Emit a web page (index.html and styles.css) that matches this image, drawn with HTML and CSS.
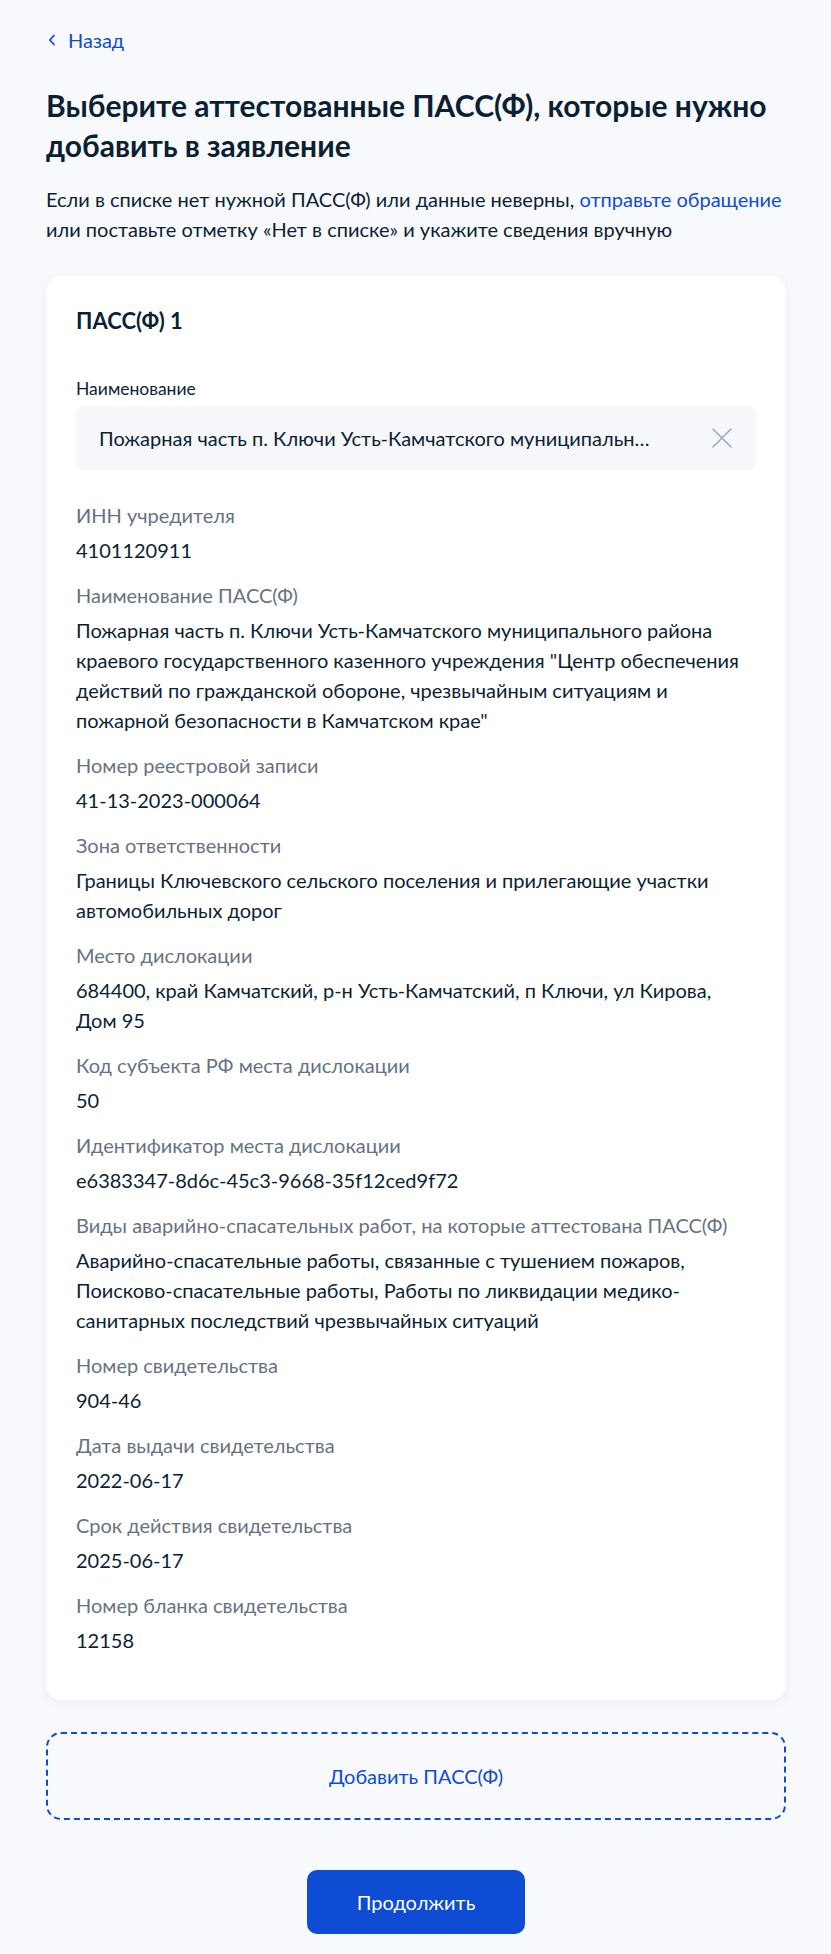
FILE: index.html
```html
<!DOCTYPE html>
<html lang="ru">
<head>
<meta charset="utf-8">
<title>Выбор ПАСС(Ф)</title>
<meta name="viewport" content="width=device-width, initial-scale=1">
<link rel="stylesheet" href="styles.css">
</head>
<body>

<div class="page">
	<a class="back" href="#">
		<svg class="back-icon" width="8" height="12" viewBox="0 0 8 12"><path d="M6 1.5 1.8 6 6 10.5" fill="none" stroke="#0d4cd3" stroke-width="1.8" stroke-linecap="round" stroke-linejoin="round"/></svg>
		Назад
	</a>

	<h1 class="title">Выберите аттестованные ПАСС(Ф), которые нужно добавить в заявление</h1>
	<p class="lead">Если в списке нет нужной ПАСС(Ф) или данные неверны, <a href="#">отправьте обращение</a> или поставьте отметку «Нет в списке» и укажите сведения вручную</p>

	<div class="card">
		<h2 class="card-title">ПАСС(Ф) 1</h2>

		<div class="select-row">
			<label class="select-label">Наименование</label>
			<div class="select">
				<span class="select-value">Пожарная часть п. Ключи Усть-Камчатского муниципальн…</span>
				<svg class="select-clear" width="22" height="22" viewBox="0 0 22 22"><path d="M2 2 20 20M20 2 2 20" stroke="#9aa8cb" stroke-width="1.6" stroke-linecap="round"/></svg>
			</div>
		</div><!-- select-row -->

		<div class="field">
			<div class="field-label">ИНН учредителя</div>
			<div class="field-value">4101120911</div>
		</div>
		<div class="field">
			<div class="field-label">Наименование ПАСС(Ф)</div>
			<div class="field-value">Пожарная часть п. Ключи Усть-Камчатского муниципального района краевого государственного казенного учреждения "Центр обеспечения действий по гражданской обороне, чрезвычайным ситуациям и пожарной безопасности в Камчатском крае"</div>
		</div>
		<div class="field">
			<div class="field-label">Номер реестровой записи</div>
			<div class="field-value">41-13-2023-000064</div>
		</div>
		<div class="field">
			<div class="field-label">Зона ответственности</div>
			<div class="field-value">Границы Ключевского сельского поселения и прилегающие участки автомобильных дорог</div>
		</div>
		<div class="field">
			<div class="field-label">Место дислокации</div>
			<div class="field-value">684400, край Камчатский, р-н Усть-Камчатский, п Ключи, ул Кирова, Дом 95</div>
		</div>
		<div class="field">
			<div class="field-label">Код субъекта РФ места дислокации</div>
			<div class="field-value">50</div>
		</div>
		<div class="field">
			<div class="field-label">Идентификатор места дислокации</div>
			<div class="field-value">e6383347-8d6c-45c3-9668-35f12ced9f72</div>
		</div>
		<div class="field">
			<div class="field-label">Виды аварийно-спасательных работ, на которые аттестована ПАСС(Ф)</div>
			<div class="field-value">Аварийно-спасательные работы, связанные с тушением пожаров, Поисково-спасательные работы, Работы по ликвидации медико-санитарных последствий чрезвычайных ситуаций</div>
		</div>
		<div class="field">
			<div class="field-label">Номер свидетельства</div>
			<div class="field-value">904-46</div>
		</div>
		<div class="field">
			<div class="field-label">Дата выдачи свидетельства</div>
			<div class="field-value">2022-06-17</div>
		</div>
		<div class="field">
			<div class="field-label">Срок действия свидетельства</div>
			<div class="field-value">2025-06-17</div>
		</div>
		<div class="field">
			<div class="field-label">Номер бланка свидетельства</div>
			<div class="field-value">12158</div>
		</div>
	</div><!-- card -->

	<button class="add-btn" type="button">Добавить ПАСС(Ф)</button>

	<div class="actions">
		<button class="primary-btn" type="button">Продолжить</button>
	</div>
</div><!-- page -->

</body>
</html>
```

FILE: styles.css
```css
* {
	box-sizing: border-box;
}

body {
	margin: 0;
	padding: 0;
	background: #f8f9fd;
	color: #0b1f33;
	font-family: Lato, "Noto Sans", sans-serif;
	font-size: 20px;
	line-height: 30px;
}

a {
	color: #0d4cd3;
	text-decoration: none;
}

.page {
	padding: 23px 45px 20px 46px;
}

.back {
	display: inline-flex;
	align-items: center;
	gap: 12px;
	font-size: 20px;
	line-height: 30px;
}

	.back-icon {
		margin-left: 2px;
	}

.title {
	margin: 30px 0 0;
	font-size: 30px;
	line-height: 40px;
	font-weight: 700;
}

.lead {
	margin: 19px 0 0;
}

.card {
	margin-top: 32px;
	background: #fff;
	border-radius: 15px;
	padding: 30px 30px 30px;
	box-shadow: 0 2px 10px rgba(42, 64, 140, .06);
}

.card-title {
	margin: 0 0 40px;
	font-size: 22px;
	line-height: 30px;
	font-weight: 700;
}

.select-row {
	margin-bottom: 30px;
}

	.select-label {
		display: block;
		font-size: 17.5px;
		line-height: 25px;
		margin-bottom: 5px;
	}

	.select {
		display: flex;
		align-items: center;
		height: 64px;
		padding: 0 23px;
		background: #f5f7fa;
		border-radius: 8px;
	}

	.select-value {
		flex: 1;
		white-space: nowrap;
	}

	.select-clear {
		flex: none;
	}

.field {
	margin-bottom: 15px;
}

	.field-label {
		color: #66727f;
		margin-bottom: 5px;
	}

.add-btn {
	display: block;
	width: 100%;
	height: 88px;
	margin-top: 32px;
	background: transparent;
	border: 2px dashed #0d4cd3;
	border-radius: 15px;
	color: #0d4cd3;
	font-family: inherit;
	font-size: 20px;
	cursor: pointer;
}

.actions {
	display: flex;
	justify-content: center;
	margin-top: 50px;
}

.primary-btn {
	width: 218px;
	height: 64px;
	background: #0d4cd3;
	color: #fff;
	border: none;
	border-radius: 10px;
	font-family: inherit;
	font-size: 20px;
	cursor: pointer;
}
```
